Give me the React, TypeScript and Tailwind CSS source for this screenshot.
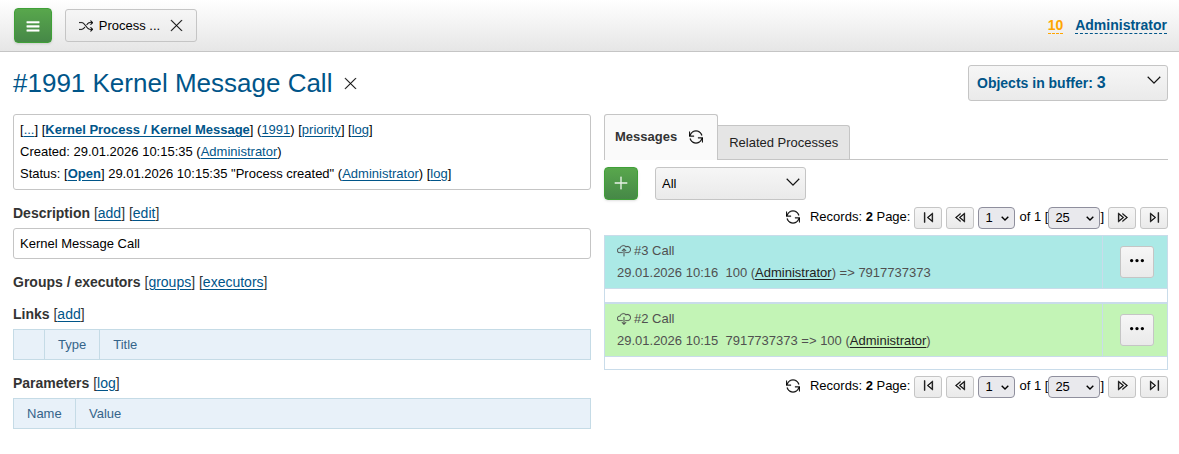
import React from 'react';
import {
  TfiAngleDown,
  TfiClose,
  TfiCloudDown,
  TfiCloudUp,
  TfiControlBackward,
  TfiControlForward,
  TfiControlShuffle,
  TfiControlSkipBackward,
  TfiControlSkipForward,
  TfiMenu,
  TfiMoreAlt,
  TfiPlus,
  TfiReload,
} from 'react-icons/tfi';

const greyButton = 'flex items-center rounded-[3px] border border-[#c5c5c5] bg-linear-to-b from-[#f6f6f6] to-[#eaeaea]';
const greenButton = 'flex items-center justify-center border border-[#3fa037] bg-linear-to-b from-[#58a74c] to-[#468847] text-white shadow';

const Link = ({ children, className = '' }: { children: React.ReactNode; className?: string }) => (
  <a href="#" className={`text-[#005589] underline underline-offset-2 ${className}`}>{children}</a>
);

const Heading = ({ title, children, className = '' }: { title: string; children: React.ReactNode; className?: string }) => (
  <h2 className={`mt-3.5 text-sm leading-[18px] text-[#333] ${className}`}>
    <b>{title}</b> {children}
  </h2>
);

// Small select of the pager
const PageSelect = ({ label, value, className }: { label: string; value: string; className: string }) => (
  <span className="relative inline-flex">
    <select
      aria-label={label}
      className={`h-[22px] appearance-none rounded border border-[#8f8f9d] bg-[#e9e9ed] pl-1.5 text-[13px] leading-5 ${className}`}
    >
      <option>{value}</option>
    </select>
    <svg viewBox="0 0 8 5" className="pointer-events-none absolute top-[9px] right-1.5 h-[5px] w-2" fill="none" stroke="black" strokeWidth="1.4">
      <path d="M0.7 0.7 4 4 7.3 0.7" />
    </svg>
  </span>
);

const PageButton = ({ label, children }: { label: string; children: React.ReactNode }) => (
  <button aria-label={label} className={`${greyButton} h-[22px] w-7 justify-center pb-0.5 text-[13px] *:stroke-[0.6]`}>{children}</button>
);

const Pager = () => (
  <div className="flex items-center justify-end gap-1 text-[13px] leading-5">
    <button aria-label="Refresh" className="mr-1.5 pb-0.5 text-sm *:stroke-[0.4]"><TfiReload /></button>
    <span className="pb-0.5">Records: <b>2</b> Page:</span>
    <PageButton label="First page"><TfiControlSkipBackward /></PageButton>
    <PageButton label="Previous page"><TfiControlBackward /></PageButton>
    <PageSelect label="Page" value="1" className="w-[37px]" />
    <span className="flex items-center">
      <span className="pb-0.5 whitespace-pre">of 1 [</span>
      <PageSelect label="Records per page" value="25" className="w-[52px]" />
      <span className="pb-0.5">]</span>
    </span>
    <PageButton label="Next page"><TfiControlForward /></PageButton>
    <PageButton label="Last page"><TfiControlSkipForward /></PageButton>
  </div>
);

const MessageRow = ({ icon, title, className, children }: { icon: React.ReactNode; title: string; className: string; children: React.ReactNode }) => (
  <tr className={className}>
    <td className="border border-[#c9dcea] px-3 py-1">
      <div className="flex items-center gap-[3px] text-sm leading-[22px] *:stroke-[0.2]">{icon}<span className="text-[13px]">{title}</span></div>
      <div className="whitespace-pre">{children}</div>
    </td>
    <td className="w-[65px] border border-[#c9dcea] pr-[13px]">
      <button aria-label={`Actions for ${title}`} className={`${greyButton} ml-auto h-8 w-[34px] justify-center pb-0.5 text-sm text-black`}><TfiMoreAlt /></button>
    </td>
  </tr>
);

const Header = () => (
  <header className="flex h-[52px] items-center justify-between border-b border-[#c5c5c5] bg-linear-to-b from-white to-[#e6e6e6] pr-3 pl-3.5">
    <div className="flex items-center gap-[13px]">
      <button aria-label="Menu" className={`${greenButton} h-[35px] w-[38px] rounded text-sm *:stroke-[0.6]`}><TfiMenu /></button>
      <div className={`${greyButton} h-[33px] w-[132px] justify-center text-[13px]`}>
        <TfiControlShuffle className="mr-1.5 stroke-[0.2] text-sm" />
        <span>Process ...</span>
        <button aria-label="Close tab" className="ml-2.5 text-[13px] *:stroke-[0.4]"><TfiClose /></button>
      </div>
    </div>
    <div className="flex gap-3 text-sm leading-4 font-bold">
      <a href="#" className="border-b border-dashed border-[#ffa500] text-[#ffa500]">10</a>
      <a href="#" className="border-b border-dashed border-[#005589] text-[#005589]">Administrator</a>
    </div>
  </header>
);

const ProcessCard = () => (
  <section className="text-[13px]">
    <div className="rounded-[3px] border border-[#c5c5c5] px-1.5 py-1 leading-[22px]">
      <p>[<Link>...</Link>] [<Link className="font-bold">Kernel Process / Kernel Message</Link>] (<Link>1991</Link>) [<Link>priority</Link>] [<Link>log</Link>]</p>
      <p>Created: 29.01.2026 10:15:35 (<Link>Administrator</Link>)</p>
      <p>Status: [<Link className="font-bold">Open</Link>] 29.01.2026 10:15:35 "Process created" (<Link>Administrator</Link>) [<Link>log</Link>]</p>
    </div>

    <Heading title="Description" className="mb-1.5">[<Link>add</Link>] [<Link>edit</Link>]</Heading>
    <div className="rounded-[3px] border border-[#c5c5c5] px-1.5 py-1 leading-[21px]">Kernel Message Call</div>

    <Heading title="Groups / executors">[<Link>groups</Link>] [<Link>executors</Link>]</Heading>

    <Heading title="Links" className="mb-1.5">[<Link>add</Link>]</Heading>
    <table className="w-full border-collapse bg-[#e8f1f9] text-left text-[#35648a]">
      <thead>
        <tr className="h-[30px] *:border *:border-[#c5dbe6] *:px-[13px] *:font-normal">
          <td className="w-[31px]"></td>
          <th className="w-[55px]">Type</th>
          <th>Title</th>
        </tr>
      </thead>
    </table>

    <Heading title="Parameters" className="mb-1.5">[<Link>log</Link>]</Heading>
    <table className="w-full border-collapse bg-[#e8f1f9] text-left text-[#35648a]">
      <thead>
        <tr className="h-[30px] *:border *:border-[#c5dbe6] *:px-[13px] *:font-normal">
          <th className="w-[62px]">Name</th>
          <th>Value</th>
        </tr>
      </thead>
    </table>
  </section>
);

const Messages = () => (
  <section className="text-[13px]">
    {/* Tabs */}
    <div className="flex items-end border-b border-[#c5c5c5] text-[#222]">
      <button className="-mb-px flex h-[46px] items-center gap-3 rounded-t-[3px] border border-b-0 border-[#c5c5c5] bg-[#fafafa] pr-3.5 pb-0.5 pl-2.5 font-bold text-[#333]">
        Messages <TfiReload className="stroke-[0.4] text-sm text-black" />
      </button>
      <button className="h-[34px] rounded-tr-[3px] border border-b-0 border-l-0 border-[#c5c5c5] bg-[#e5e5e5] px-[11px]">Related Processes</button>
    </div>

    <div className="mt-[7px] mb-[7px] flex gap-[17px]">
      <button aria-label="Add message" className={`${greenButton} h-[33px] w-[34px] rounded-sm pb-0.5 text-sm *:stroke-[0.4]`}><TfiPlus /></button>
      <span className="relative">
        <select aria-label="Message filter" className={`${greyButton} h-[33px] w-[151px] appearance-none px-1.5`}>
          <option>All</option>
        </select>
        <TfiAngleDown className="pointer-events-none absolute top-2 right-1.5 stroke-[0.4] text-sm" />
      </span>
    </div>

    <Pager />
    <table className="my-1.5 w-full border-collapse leading-[22px] text-[#505050]">
      <tbody>
        <MessageRow icon={<TfiCloudUp />} title="#3 Call" className="bg-[#abe9e6]">
          29.01.2026 10:16  100 (<a href="#" className="text-[#222] underline underline-offset-2">Administrator</a>){' => 7917737373'}
        </MessageRow>
        <tr className="h-3.5"><td colSpan={2} className="border border-b-2 border-[#c9dcea]"></td></tr>
        <MessageRow icon={<TfiCloudDown />} title="#2 Call" className="bg-[#c3f4b6]">
          29.01.2026 10:15  {'7917737373 => 100 ('}<a href="#" className="text-[#222] underline underline-offset-2">Administrator</a>)
        </MessageRow>
        <tr className="h-[13px]"><td colSpan={2} className="border border-[#c9dcea]"></td></tr>
      </tbody>
    </table>
    <Pager />
  </section>
);

const App = () => {
  return (
    <div className="bg-white font-['Liberation_Sans',Arial,sans-serif] text-black">
      <Header />
      <main className="pt-[13px] pr-[11px] pb-6 pl-[13px]">
        <div className="mb-[13px] flex items-center justify-between">
          <h1 className="flex items-center gap-3 text-[26px] leading-9 text-[#005589]">
            #1991 Kernel Message Call
            <button aria-label="Close process" className="text-[13px] text-black *:stroke-[0.4]"><TfiClose /></button>
          </h1>
          <button className={`${greyButton} h-9 w-[200px] justify-between pr-1.5 pl-2 text-[#005589]`}>
            <span className="text-sm font-bold">Objects in buffer: <span className="text-base">3</span></span>
            <TfiAngleDown className="mb-1.5 stroke-[0.4] text-sm text-black" />
          </button>
        </div>

        <div className="grid grid-cols-[578fr_564fr] items-start gap-[13px]">
          <ProcessCard />
          <Messages />
        </div>
      </main>
    </div>
  );
};

export default App;
